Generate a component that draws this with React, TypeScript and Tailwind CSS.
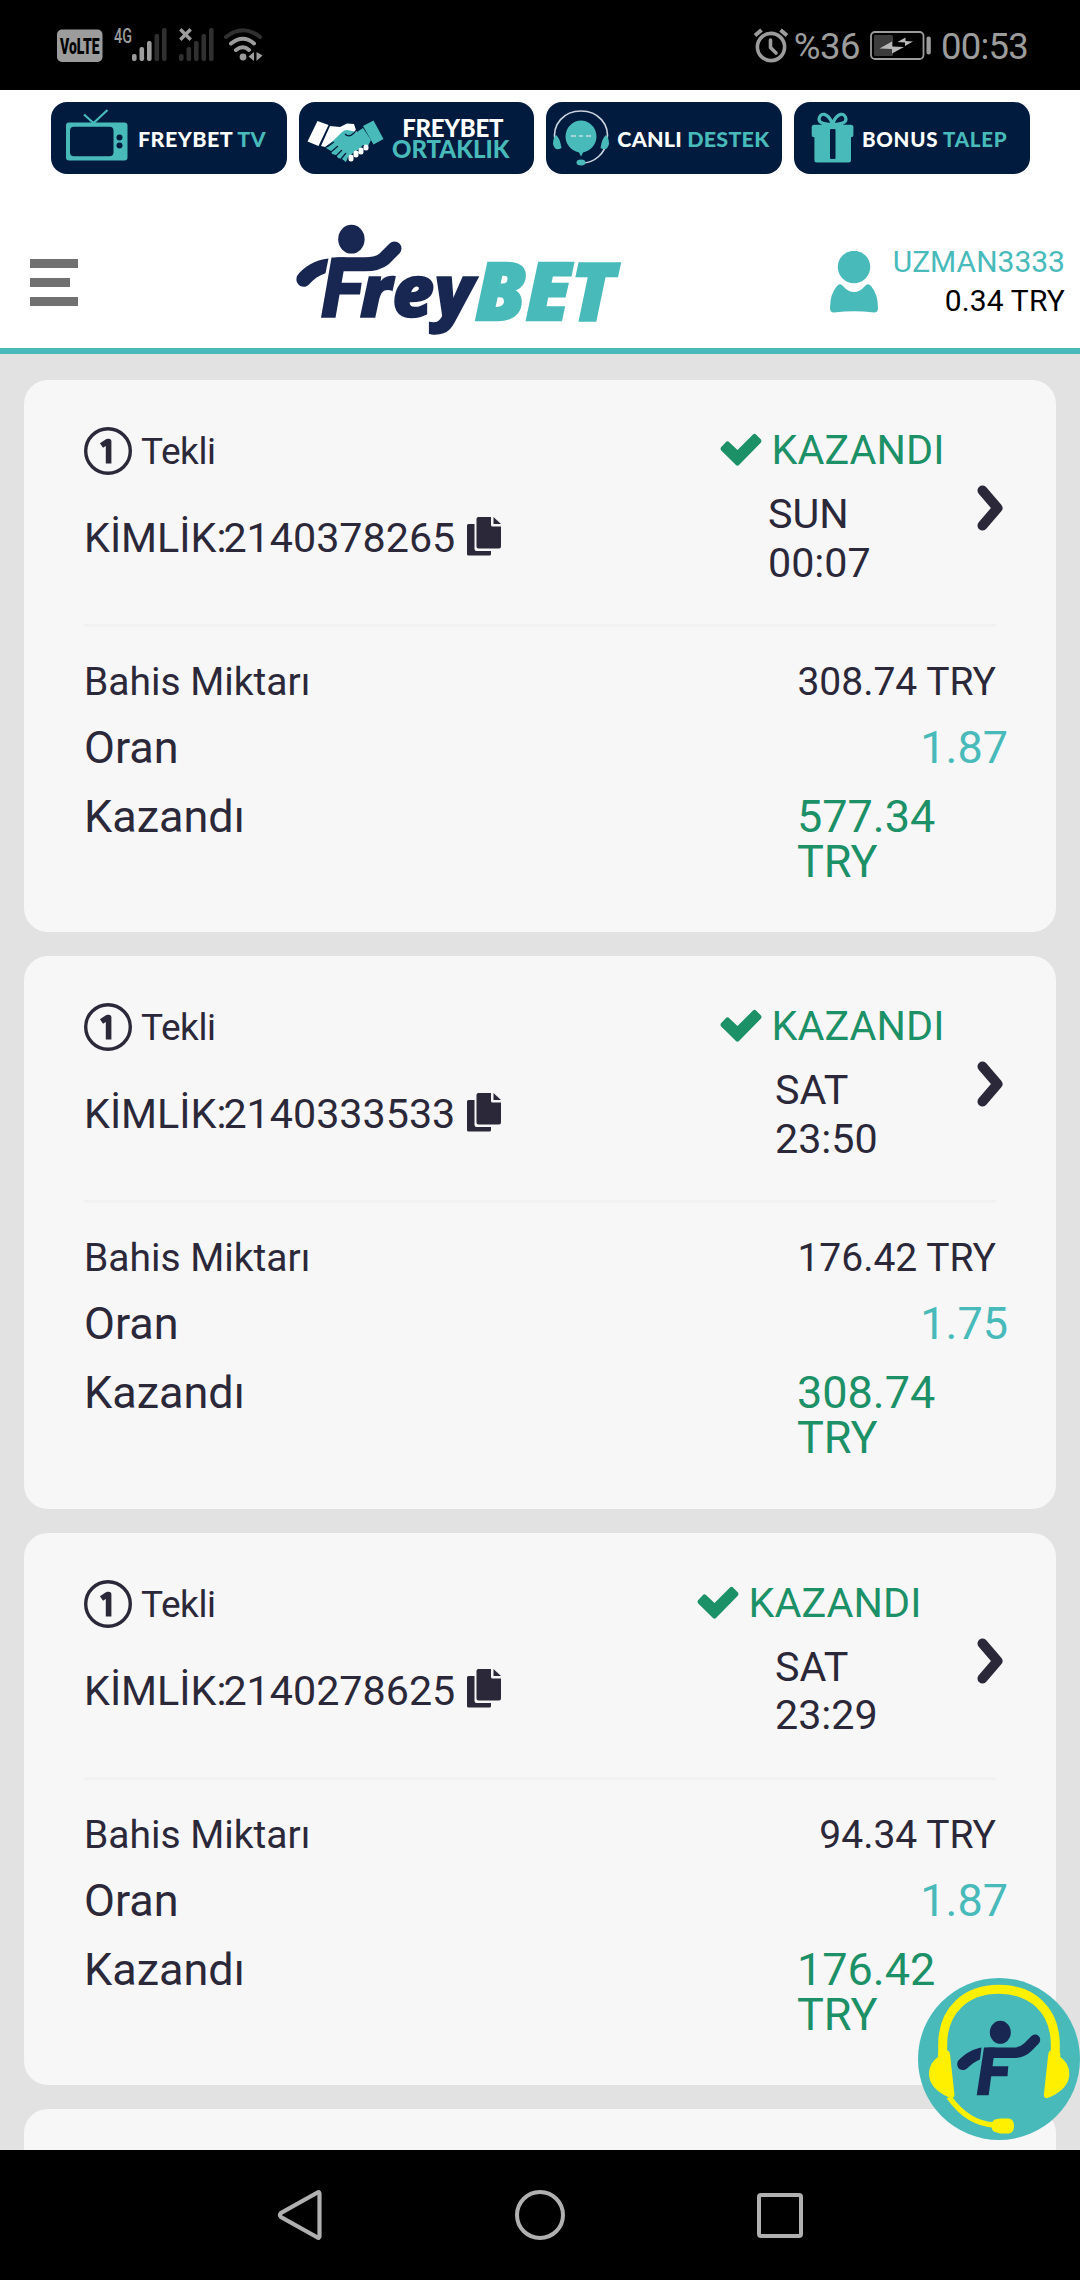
import type { ReactNode } from "react";

type Bet = {
  id: string;
  day: string;
  time: string;
  stake: string;
  odds: string;
  win: string;
  statusPad: string;
  datePad: string;
};

const bets: Bet[] = [
  {
    id: "2140378265",
    day: "SUN",
    time: "00:07",
    stake: "308.74 TRY",
    odds: "1.87",
    win: "577.34",
    statusPad: "pl-[23px]",
    datePad: "pl-[71px]",
  },
  {
    id: "2140333533",
    day: "SAT",
    time: "23:50",
    stake: "176.42 TRY",
    odds: "1.75",
    win: "308.74",
    statusPad: "pl-[23px]",
    datePad: "pl-[78px]",
  },
  {
    id: "2140278625",
    day: "SAT",
    time: "23:29",
    stake: "94.34 TRY",
    odds: "1.87",
    win: "176.42",
    statusPad: "pl-0",
    datePad: "pl-[78px]",
  },
];

function SignalBars({ active }: { active: number }) {
  const tops = [26, 19, 13, 6, 0];
  return (
    <svg width="35" height="34" viewBox="0 0 35 34">
      {tops.map((top, i) => (
        <rect
          key={top}
          x={i * 7.5}
          y={top}
          width="4.6"
          height={33 - top}
          rx="2"
          fill={i < active ? "#9c9c9c" : "#303030"}
        />
      ))}
    </svg>
  );
}

function StatusBar() {
  return (
    <div className="flex h-[90px] items-start justify-between bg-black pt-[28px] pr-[52px] pl-[57px] text-[#9c9c9c]">
      <div className="flex items-start">
        <svg className="overflow-visible" width="46" height="34" viewBox="0 0 46 34">
          <rect y="1.5" width="45.5" height="32.5" rx="5" fill="#9c9c9c" />
          <text
            x="3"
            y="25.5"
            textLength="39.5"
            lengthAdjust="spacingAndGlyphs"
            fontFamily="Roboto, sans-serif"
            fontWeight="900"
            fontSize="22"
          >
            VoLTE
          </text>
        </svg>
        <svg className="ml-[11px] overflow-visible" width="18" height="17" viewBox="0 0 18 17">
          <text
            x="0"
            y="15"
            textLength="18"
            lengthAdjust="spacingAndGlyphs"
            fontFamily="Roboto, sans-serif"
            fontWeight="500"
            fontSize="20"
            fill="#9c9c9c"
          >
            4G
          </text>
        </svg>
        <SignalBars active={3} />
        <div className="relative ml-[12px]">
          <SignalBars active={0} />
          <svg
            className="absolute top-0 left-0"
            width="13"
            height="13"
            viewBox="0 0 13 13"
            stroke="#9c9c9c"
            strokeWidth="3.4"
          >
            <path d="M1.3 1.3 11.7 11.7M11.7 1.3 1.3 11.7" />
          </svg>
        </div>
        <svg
          className="ml-[9px]"
          width="42"
          height="34"
          viewBox="0 0 42 34"
          fill="none"
          strokeLinecap="round"
          strokeWidth="4"
        >
          <path d="M3 9Q20 -4.500 37 9" stroke="#303030" />
          <path d="M8 15.500Q20 6 31 15.500M13 22Q20 16.500 26 22" stroke="#9c9c9c" />
          <circle cx="20" cy="29" r="3.400" fill="#9c9c9c" />
          <path d="M31 24v9l-5.500-4.500zM33.500 24v9l6-5.500z" fill="#9c9c9c" />
        </svg>
      </div>
      <div className="flex items-start">
        <svg
          width="34"
          height="35"
          viewBox="0 0 34 35"
          fill="none"
          stroke="#9c9c9c"
          strokeWidth="3.6"
        >
          <circle cx="17" cy="19" r="13.600" />
          <path d="M16.500 12v7.500l5.500 5.500" strokeLinecap="round" />
          <path d="M1 7.500 7.500 2M33 7.500 26.500 2" strokeWidth="4" />
        </svg>
        <span className="ml-[6px] text-[36.5px] leading-[38px] tracking-[-0.5px]">%36</span>
        <svg className="mt-[3px] ml-[10px]" width="62" height="30" viewBox="0 0 62 30">
          <rect
            x="1"
            y="1"
            width="52.500"
            height="27"
            rx="4"
            fill="none"
            stroke="#9c9c9c"
            strokeWidth="1.8"
          />
          <rect x="4" y="4" width="19" height="21" rx="1.500" fill="#3c3c3c" />
          <rect x="56.500" y="5.500" width="4.300" height="18" rx="2" fill="#9c9c9c" />
          <path
            d="M9.500 17.500 22 10.500v5l12 .5-12 6.500v-4.500zM27.500 11l8-4.500v3.500l7.500.5-8 4.500v-3.500z"
            fill="#b8b8b8"
          />
        </svg>
        <span className="ml-[9px] text-[36.5px] leading-[38px] tracking-[-0.8px]">00:53</span>
      </div>
    </div>
  );
}

function TvIcon() {
  return (
    <svg width="88" height="72" viewBox="0 0 88 72" fill="none">
      <path d="M33 12.500 42.500 21 56.500 8" stroke="#48baba" strokeWidth="2.200" />
      <rect x="15" y="20.500" width="61.500" height="38" rx="3" fill="#48baba" />
      <rect x="19" y="24.700" width="43.500" height="29.500" rx="4" fill="#001b3d" />
      <circle cx="68.500" cy="35.500" r="3" fill="#001b3d" />
      <circle cx="68.500" cy="43.500" r="3" fill="#001b3d" />
    </svg>
  );
}

function HandshakeIcon() {
  return (
    <svg width="94" height="72" viewBox="0 0 94 72">
      <path d="M18.500 19 29.500 23 19.500 44 8.500 39.500z" fill="#fff" />
      <path d="M31 24 41 25 48 21.500 55 22 58 31 45 31 26 45 22 44z" fill="#fff" />
      <path
        d="M43 30Q45 28 48 28L58 30 64 26 72 38 69 44 64 43 60 47 54 51 49 55 47 60 43 57 39 56 37 53 33 52 32 49 27 46z"
        fill="#48baba"
      />
      <path d="M64 24 74.500 18.500 84.500 37 74.500 42.500z" fill="#48baba" />
      <path
        d="M28 45 35 40M32 50 39 44M37 54 43 48M42 57 47 51"
        stroke="#001b3d"
        strokeWidth="1.200"
      />
      <path
        d="M67 45v1M62 48v2M57 51v2M52 55v2"
        stroke="#fff"
        strokeWidth="5"
        strokeLinecap="round"
      />
      <path d="M46 32Q50 36 55 31L58 27" stroke="#001b3d" strokeWidth="1.200" fill="none" />
    </svg>
  );
}

function SupportIcon() {
  return (
    <svg width="71" height="72" viewBox="0 0 71 72" fill="none">
      <path
        d="M9 39C6 22 18 9 35 9s29 13 26 30c-2 12-12 22-25 22"
        stroke="#c9d3de"
        strokeWidth="1.600"
      />
      <path
        d="M35 18.500a16 16 0 0 1 5 31l-3 1-2 4-2-4-3-1a16 16 0 0 1 5-31z"
        fill="#48baba"
      />
      <path d="M25 34h5m3 0h4m3 0h5" stroke="#a9d5da" strokeWidth="1.800" />
      <path
        d="M10 33Q14 36 15.500 46 9 50 7 42 7 36 10 33zM60 33Q56 36 54.500 46 61 50 63 42 63 36 60 33z"
        fill="#48baba"
      />
      <ellipse cx="35" cy="60.500" rx="4.500" ry="3" fill="#48baba" />
    </svg>
  );
}

function GiftIcon() {
  return (
    <svg width="68" height="72" viewBox="0 0 68 72" fill="none">
      <path
        d="M38.500 22C34 10 26 10 25 17c0 4 6 6 13.500 5zM38.500 22C43 10 51 10 52 17c0 4-6 6-13.500 5z"
        stroke="#48baba"
        strokeWidth="3.200"
      />
      <rect x="17.700" y="22.700" width="41.700" height="12.500" rx="2.500" fill="#48baba" />
      <rect x="20.400" y="30" width="36.600" height="30.500" rx="2.500" fill="#48baba" />
      <rect x="36" y="27" width="5.500" height="30" rx="1" fill="#001b3d" />
    </svg>
  );
}

function PromoButton({ icon, children }: { icon: ReactNode; children: ReactNode }) {
  return (
    <button className="flex h-[72px] w-[235.67px] items-center overflow-hidden rounded-[16px] bg-[#001b3d] font-[Lato,sans-serif] font-black whitespace-nowrap text-white">
      {icon}
      {children}
    </button>
  );
}

function PromoBar() {
  return (
    <div className="flex h-[84px] items-end gap-[12px] pl-[51px]">
      <PromoButton icon={<TvIcon />}>
        <span className="ml-[-1px] pt-[2px] text-[21.5px] tracking-[0.4px]">
          FREYBET <span className="text-[#48baba]">TV</span>
        </span>
      </PromoButton>
      <PromoButton icon={<HandshakeIcon />}>
        <span className="flex w-[116px] flex-col items-center text-[24px] leading-[21px]">
          <span className="pl-[4px] tracking-[-0.3px]">FREYBET</span>
          <span className="text-[#48baba]">ORTAKLIK</span>
        </span>
      </PromoButton>
      <PromoButton icon={<SupportIcon />}>
        <span className="pt-[2px] text-[21.5px] tracking-[0.2px]">
          CANLI <span className="text-[#48baba]">DESTEK</span>
        </span>
      </PromoButton>
      <PromoButton icon={<GiftIcon />}>
        <span className="pt-[2px] text-[20.5px] tracking-[0.7px]">
          BONUS <span className="text-[#48baba]">TALEP</span>
        </span>
      </PromoButton>
    </div>
  );
}

function Logo() {
  return (
    <svg className="overflow-visible" width="330" height="112" viewBox="294 224 330 112">
      <g fill="#182751">
        <ellipse cx="351.400" cy="239.200" rx="13.200" ry="14.400" />
        <path d="M328.500 258.500C315 260 303 267 297 276c-3 8 6 14.500 12 8.500 4-5 10-9 16.500-11.200z" />
        <path d="M331.500 257.500H346L335.500 317.700H321z" />
        <path d="M340 282.700H361.700L360 294.500H338z" />
        <path
          d="M338 264.300H364Q377 264.500 384 259L394.500 248.500"
          fill="none"
          stroke="#182751"
          strokeWidth="14"
          strokeLinecap="round"
          strokeLinejoin="round"
        />
        <text
          x="360"
          y="316.500"
          textLength="114"
          lengthAdjust="spacingAndGlyphs"
          fontFamily="'Open Sans', sans-serif"
          fontWeight="800"
          fontStyle="italic"
          fontSize="72"
          stroke="#182751"
          strokeWidth="1.500"
        >
          rey
        </text>
      </g>
      <text
        x="475"
        y="320"
        textLength="140"
        lengthAdjust="spacingAndGlyphs"
        fontFamily="'Open Sans', sans-serif"
        fontWeight="800"
        fontStyle="italic"
        fontSize="79"
        fill="#48baba"
        stroke="#48baba"
        strokeWidth="2.400"
      >
        BET
      </text>
    </svg>
  );
}

function Header() {
  return (
    <header className="flex h-[180px] items-start justify-between border-b-[6px] border-[#48baba] pr-[15px] pl-[30px]">
      <button className="mt-[85px] flex flex-col gap-[10px]">
        <span className="h-[9px] w-[48px] bg-[#707070]" />
        <span className="h-[9px] w-[40px] bg-[#707070]" />
        <span className="h-[9px] w-[48px] bg-[#707070]" />
      </button>
      <div className="mt-[50px] ml-[11px]">
        <Logo />
      </div>
      <div className="flex items-start">
        <svg
          className="mt-[77px] mr-[15px]"
          width="48"
          height="62"
          viewBox="0 0 48 62"
          fill="#48baba"
        >
          <circle cx="24" cy="16" r="16.200" />
          <path d="M7 35Q10 31.500 13 35 18 41 24 41T35 35Q38 31.500 41 35 48 43 48 57 48 61.500 44 61.500 24 59 4 61.500 0 61.500 0 57 0 43 7 35z" />
        </svg>
        <div className="mt-[68px] flex flex-col items-end text-[30px] leading-[39px]">
          <span className="text-[#48baba]">UZMAN3333</span>
          <span className="tracking-[0.15px] text-black">0.34 TRY</span>
        </div>
      </div>
    </header>
  );
}

function CopyIcon() {
  return (
    <svg className="mt-[-4px] ml-[12px]" width="35" height="39" viewBox="0 0 35 39" fill="#2b2839">
      <path d="M1.500 7H7.500V32Q7.500 34 9.500 34H24V37Q24 38.500 22.500 38.500H1.500Q0 38.500 0 37V8.500Q0 7 1.500 7z" />
      <path d="M11.500 0H24V8Q24 9.500 25.500 9.500H34V29.500Q34 31.500 32 31.500H11.500Q9.500 31.500 9.500 29.500V2Q9.500 0 11.500 0z" />
      <path d="M26.500 0V7H34z" />
    </svg>
  );
}

function BetCard({ bet }: { bet: Bet }) {
  return (
    <div className="h-[552.33px] shrink-0 rounded-[24px] bg-[#f7f7f7] pl-[60px] text-[#2b2839]">
      <div className="flex h-[244px] w-[919px] items-start">
        <div className="flex w-[613px] flex-col gap-[39px] pt-[47px]">
          <div className="flex h-[48px] items-center">
            <svg width="48" height="48" viewBox="0 0 48 48" fill="none" stroke="#2b2839">
              <circle cx="24" cy="24" r="22.300" strokeWidth="3.400" />
              <path
                d="M17.500 18.500 23.500 14.500H24.600V36.500"
                strokeWidth="5.600"
                strokeLinejoin="round"
              />
            </svg>
            <span className="ml-[9px] pt-[2px] text-[37px] leading-[48px] tracking-[-0.4px]">
              Tekli
            </span>
          </div>
          <div className="flex h-[48px] items-center text-[41.25px] leading-[48px]">
            <span>KİMLİK:</span>
            <span className="ml-[-3px]">{bet.id}</span>
            <CopyIcon />
          </div>
        </div>
        <div className="flex w-[279px] flex-col pt-[46px] text-[41.25px]">
          <div className={`flex h-[48px] items-center text-[#1c9066] ${bet.statusPad}`}>
            <svg width="42" height="34" viewBox="0 0 42 34" fill="#1c9066">
              <path d="M1 14.300 6 9Q7.500 7.500 9 9L17.500 17 33 1.500Q34.500 0 36 1.500L41 6.500Q42 8 41 9.500L19 32Q17.500 33.500 16 32L1 17.300Q0 16 1 14.300z" />
            </svg>
            <span className="ml-[9.5px] leading-[48px] tracking-[0.1px]">KAZANDI</span>
          </div>
          <div className={`mt-[16px] flex flex-col leading-[48.5px] ${bet.datePad}`}>
            <span>{bet.day}</span>
            <span>{bet.time}</span>
          </div>
        </div>
        <svg
          className="mt-[105px] ml-[1px] shrink-0"
          width="26"
          height="46"
          viewBox="0 0 26 46"
          fill="none"
          stroke="#2b2839"
          strokeWidth="10"
          strokeLinecap="round"
          strokeLinejoin="round"
        >
          <path d="M5.500 5.500 20.500 23 5.500 40.500" />
        </svg>
      </div>
      <div className="h-[3px] w-[912px] bg-[#f2f2f2]" />
      <div className="mt-[31px] flex h-[66px] w-[912px] justify-between text-[39px] leading-[48px]">
        <span>Bahis Miktarı</span>
        <span>{bet.stake}</span>
      </div>
      <div className="flex h-[70px] w-[924px] justify-between text-[45px] leading-[48px]">
        <span>Oran</span>
        <span className="text-[#48baba]">{bet.odds}</span>
      </div>
      <div className="flex w-[912px] justify-between text-[45px] leading-[45px]">
        <span>Kazandı</span>
        <div className="flex w-[199px] flex-col text-[#1c9066]">
          <span>{bet.win}</span>
          <span>TRY</span>
        </div>
      </div>
    </div>
  );
}

function SupportBubble() {
  const ear =
    "M20 75Q31 69 32 76L36.500 117Q36 122 30 119 11 110 11 96 11 85 20 79z";
  return (
    <button className="absolute right-0 bottom-[10px]">
      <svg width="162" height="162" viewBox="0 0 162 162" fill="none">
        <circle cx="81" cy="81" r="81" fill="#48baba" />
        <path
          d="M24.700 78V66C25 32 48 11.300 81 11.300S137 32 137.300 66V78"
          stroke="#fff000"
          strokeWidth="9"
        />
        <path d={ear} fill="#fff000" />
        <path d={ear} fill="#fff000" transform="matrix(-1 0 0 1 162.300 0)" />
        <path d="M31 119Q50 146 77 147" stroke="#fff000" strokeWidth="5.500" />
        <path
          d="M77 141.500 82 140.500H91Q96 141 96 148T91 155.500H82L77 154Q73.500 153 73.500 148T77 141.500z"
          fill="#fff000"
        />
        <g fill="#182751">
          <ellipse cx="82.300" cy="54.300" rx="10.500" ry="11.500" />
          <path d="M66 69.600H77L70.700 117.300H58.700z" />
          <path d="M71 88.300H90.300L89.500 98.300H70z" />
          <path d="M63.500 69.500C55 71 46 76 40 83c-3 6 3 12 9 7.500 4-4 8-7 13-9z" />
        </g>
        <path
          d="M71 74.700H95Q104 75 110 69L117 61.800"
          stroke="#182751"
          strokeWidth="10.500"
          strokeLinecap="round"
          strokeLinejoin="round"
        />
      </svg>
    </button>
  );
}

function NavBar() {
  return (
    <div className="flex h-[130px] items-center justify-between bg-black pr-[277px] pl-[277px]">
      <svg width="46" height="52" viewBox="0 0 46 52" fill="none" stroke="#b0b0b0" strokeWidth="4.200">
        <path d="M42.500 4.500V47.500Q42 49.500 40.500 48.500L4 28Q2 26 4 24L40.500 3.500Q42 2.500 42.500 4.500z" />
      </svg>
      <div className="h-[50px] w-[50px] rounded-full border-4 border-[#b0b0b0]" />
      <div className="h-[45px] w-[46px] rounded-[4px] border-4 border-[#b0b0b0]" />
    </div>
  );
}

export default function App() {
  return (
    <div className="flex h-[2280px] w-[1080px] flex-col overflow-hidden bg-white font-[Roboto,sans-serif]">
      <StatusBar />
      <PromoBar />
      <Header />
      <main className="relative flex h-[1796px] flex-col gap-[24px] overflow-hidden bg-[#e2e2e2] px-[24px] pt-[26px]">
        {bets.map((bet) => (
          <BetCard key={bet.id} bet={bet} />
        ))}
        <div className="h-[80px] shrink-0 rounded-[24px] bg-[#f7f7f7]" />
        <SupportBubble />
      </main>
      <NavBar />
    </div>
  );
}
